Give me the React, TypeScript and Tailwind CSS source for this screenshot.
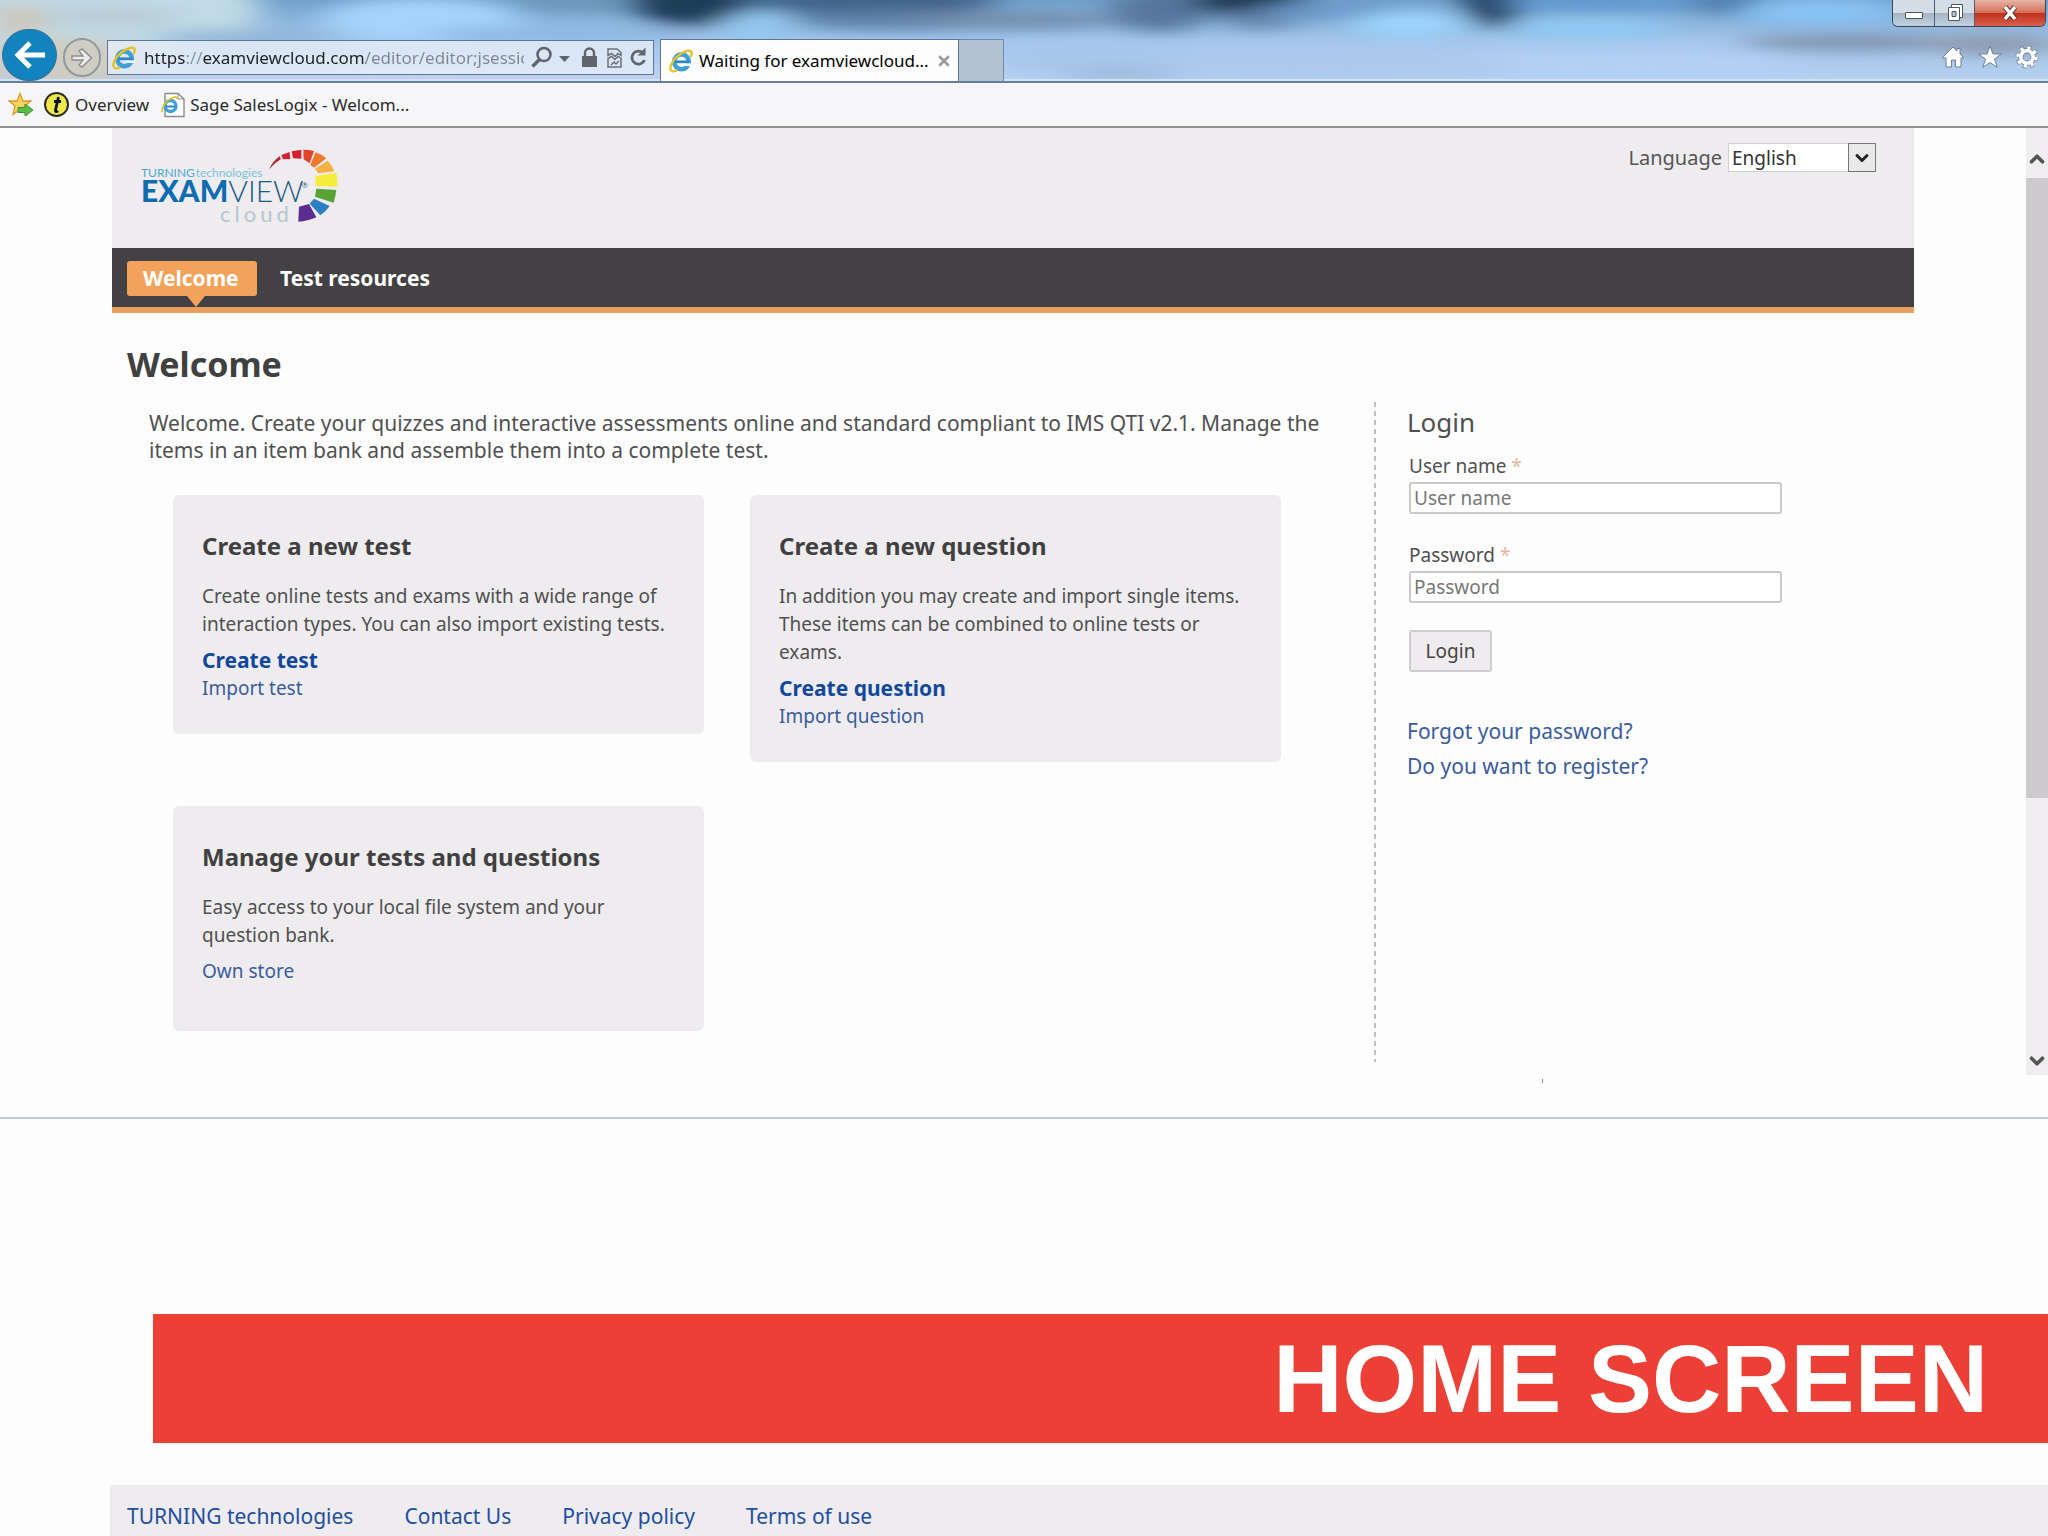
import type { ReactNode } from "react";
import { ChevronDown, ChevronUp, X } from "lucide-react";

type CardLink = { label: string; strong?: boolean };
type Card = { title: string; text: string; links: CardLink[] };

const cards: Card[] = [
  {
    title: "Create a new test",
    text: "Create online tests and exams with a wide range of interaction types. You can also import existing tests.",
    links: [{ label: "Create test", strong: true }, { label: "Import test" }],
  },
  {
    title: "Create a new question",
    text: "In addition you may create and import single items. These items can be combined to online tests or exams.",
    links: [
      { label: "Create question", strong: true },
      { label: "Import question" },
    ],
  },
  {
    title: "Manage your tests and questions",
    text: "Easy access to your local file system and your question bank.",
    links: [{ label: "Own store" }],
  },
];

const footerLinks = [
  "TURNING technologies",
  "Contact Us",
  "Privacy policy",
  "Terms of use",
];

// x, y, rx, ry, colour
const glassBlobs: [number, number, number, number, string][] = [
  [60, 10, 200, 60, "#c0dae6"],
  [20, 20, 20, 18, "#cfc3ae"],
  [110, 16, 70, 10, "#b9ccd6"],
  [60, 62, 80, 26, "#cfcdc3"],
  [420, 20, 100, 22, "#a4d3fb"],
  [250, 38, 100, 8, "#8fb4d6"],
  [560, 34, 130, 8, "#8db8e2"],
  [440, 76, 300, 8, "#c3d0f0"],
  [580, 0, 70, 10, "#6d94b8"],
  [690, 2, 60, 24, "#1f3d5a"],
  [755, 28, 36, 16, "#94c8f0"],
  [870, 0, 130, 14, "#3f6289"],
  [900, 20, 110, 10, "#5f83aa"],
  [1010, 20, 110, 8, "#6f8aa8"],
  [1160, 10, 50, 22, "#56779c"],
  [1250, 0, 60, 15, "#1f3752"],
  [1260, 20, 36, 9, "#6383aa"],
  [1330, 10, 70, 8, "#6a98c8"],
  [1410, 24, 60, 12, "#9ed6ff"],
  [1492, 2, 28, 26, "#1c3a58"],
  [1590, 28, 80, 10, "#8fcbf6"],
  [1600, 2, 100, 8, "#5e9ad2"],
  [1730, 2, 40, 12, "#4f7dac"],
  [1820, 12, 80, 14, "#88c2f4"],
  [1850, 42, 110, 9, "#8095b0"],
  [1990, 44, 70, 11, "#8d9bb0"],
  [1600, 64, 200, 14, "#b3d0f5"],
  [1320, 66, 200, 14, "#adc9ec"],
  [1090, 60, 90, 12, "#a6c6ea"],
  [1120, 76, 60, 6, "#9fb8d8"],
];

const IeIcon = () => (
  <svg viewBox="0 0 24 24" className="h-6 w-6 shrink-0" aria-hidden="true">
    <circle cx="12.5" cy="12.8" r="7.400" fill="none" stroke="#3f9fd8" strokeWidth="4.6" />
    <path d="M6 12.800h14" stroke="#2f86c4" strokeWidth="2.8" />
    <path d="M15 14.400h8.500v2.600h-8.500z" fill="#f6f9fc" />
    <path
      d="M2.500 22C-.5 19 3 11 10 6 15.500 1.800 21.500.6 22.600 3c.7 1.600-.3 3.500-1.300 5"
      fill="none"
      stroke="#e6c229"
      strokeWidth="2.4"
    />
    <path d="M2.500 22c1.500 1 4 .2 6-1" fill="none" stroke="#e6c229" strokeWidth="2.2" />
  </svg>
);

const Glass = () => (
  <svg
    viewBox="0 0 2048 81"
    preserveAspectRatio="none"
    className="absolute inset-0 h-full w-full"
    aria-hidden="true"
  >
    <defs>
      <filter id="haze" x="-5%" y="-60%" width="110%" height="220%">
        <feGaussianBlur stdDeviation="18 7" />
      </filter>
      <linearGradient id="sky" x1="0" y1="0" x2="0" y2="1">
        <stop offset="0" stopColor="#6f9fcb" />
        <stop offset="0.5" stopColor="#a3c6eb" />
        <stop offset="1" stopColor="#b6d0f0" />
      </linearGradient>
    </defs>
    <rect width="2048" height="81" fill="url(#sky)" />
    <g filter="url(#haze)">
      {glassBlobs.map(([x, y, rx, ry, fill], i) => (
        <ellipse key={i} cx={x} cy={y} rx={rx} ry={ry} fill={fill} />
      ))}
    </g>
    <rect y="79" width="2048" height="2" fill="#d3e2f4" />
  </svg>
);

const AddressBar = () => (
  <div className="flex h-[35px] w-[547px] items-center border border-[#5d7796] bg-[#e6eef7]/80 pl-1">
    <IeIcon />
    <input
      aria-label="Address"
      readOnly
      value="https://examviewcloud.com/editor/editor;jsessionid"
      className="ml-2 w-[380px] bg-[linear-gradient(to_right,#1d1f22_41px,#8b9198_41px,#8b9198_59px,#1d1f22_59px,#1d1f22_221px,#7f868e_221px)] bg-clip-text text-[17px] text-transparent outline-none"
    />
    <svg viewBox="0 0 118 28" className="ml-1.5 h-7 w-[118px] shrink-0" aria-hidden="true">
      <g fill="none" stroke="#5f656c" strokeWidth="2.6">
        <circle cx="14" cy="10.500" r="6.500" />
        <path d="M9.500 15.500 2.500 22.500" strokeWidth="3.400" />
      </g>
      <path d="M29 12h11l-5.500 6z" fill="#5f656c" />
      <path d="M52 12h15v11H52z" fill="#5f656c" />
      <path d="M55 12V9a4.500 4.500 0 0 1 9 0v3" fill="none" stroke="#5f656c" strokeWidth="2.400" />
      <g fill="none" stroke="#6b7178" strokeWidth="1.500">
        <path d="M78 11.500V5h9l4 3.500v3l-3-2-3 3-3.500-3z" />
        <path d="M78 14.500V23h13v-8.500l-3-2-3 3-3.500-3z" />
        <path d="M81 21l3-3 2 2 3-3" />
      </g>
      <path d="M113 9a6.500 6.500 0 1 0 1.500 7" fill="none" stroke="#5f656c" strokeWidth="2.800" />
      <path d="M107.500 11.500h8V3.500z" fill="#5f656c" />
    </svg>
  </div>
);

const WindowButtons = () => (
  <div className="flex h-[27px] overflow-hidden rounded-b-md border border-t-0 border-[#35485f]">
    <button
      type="button"
      aria-label="Minimize"
      className="flex w-[42px] items-end justify-center border-r border-[#4b5f78] bg-[linear-gradient(#d4dde6_50%,#a6b3c4_50%,#c3d0de)] pb-[7px]"
    >
      <span className="h-[7px] w-[18px] rounded-[1px] border border-[#4a5564] bg-white" />
    </button>
    <button
      type="button"
      aria-label="Restore"
      className="flex w-10 items-center justify-center border-r border-[#4b5f78] bg-[linear-gradient(#d4dde6_50%,#a6b3c4_50%,#c3d0de)]"
    >
      <svg viewBox="0 0 20 18" className="h-[18px] w-5" fill="#fff" stroke="#4a5564">
        <path d="M6.500.5h11v13h-11z" />
        <path d="M3.500 3.500h11v13h-11z" />
        <path d="M7 7.500h4v5H7z" fill="#b8c4d2" />
      </svg>
    </button>
    <button
      type="button"
      aria-label="Close window"
      className="flex w-[70px] items-center justify-center bg-[linear-gradient(#e8b4a6,#d6705a_48%,#bf2f1a_50%,#d9604a)]"
    >
      <svg viewBox="0 0 18 16" className="h-4 w-[18px]">
        <path d="M4 2l10 12M14 2L4 14" stroke="#5a3a3a" strokeWidth="5.500" />
        <path d="M4 2l10 12M14 2L4 14" stroke="#fff" strokeWidth="3.500" />
      </svg>
    </button>
  </div>
);

const ToolIcons = () => (
  <div className="flex gap-[11px] pr-1.5">
    <button type="button" aria-label="Home">
      <svg viewBox="0 0 26 24" className="h-6 w-[26px]">
        <path
          d="M13 2l4 4V3.500h3V9l4 4h-3v9h-5.500v-7h-4v7H6v-9H2z"
          fill="#fff"
          stroke="#6c7f98"
        />
      </svg>
    </button>
    <button type="button" aria-label="Favorites">
      <svg viewBox="0 0 26 24" className="h-6 w-[26px]">
        <path
          d="M13 1l3 8h8.500l-7 5 2.800 8.500L13 17.500l-7.300 5L8.500 14l-7-5H10z"
          fill="#fff"
          stroke="#6c7f98"
        />
      </svg>
    </button>
    <button type="button" aria-label="Tools">
      <svg viewBox="0 0 26 24" className="h-6 w-[26px]">
        <circle cx="13" cy="12" r="9" fill="none" stroke="#6c7f98" strokeWidth="5" strokeDasharray="3.900 3.168" />
        <circle cx="13" cy="12" r="6.200" fill="none" stroke="#6c7f98" strokeWidth="5.200" />
        <circle cx="13" cy="12" r="9" fill="none" stroke="#fff" strokeWidth="3.600" strokeDasharray="3.200 3.868" />
        <circle cx="13" cy="12" r="6.200" fill="none" stroke="#fff" strokeWidth="3.600" />
      </svg>
    </button>
  </div>
);

const BrowserBar = () => (
  <header className="relative flex h-[83px] justify-between border-b-2 border-[#667f9d] text-black">
    <Glass />
    <div className="relative flex items-end">
      <button
        type="button"
        aria-label="Back"
        className="ml-0.5 flex h-[52px] w-[55px] items-center justify-center rounded-full border border-[#3a6d92] bg-[#1383c0]"
      >
        <svg viewBox="0 0 32 28" className="h-7 w-8" fill="none" stroke="#fff" strokeWidth="5">
          <path d="M31 14H4M16 2L4 14l12 12" />
        </svg>
      </button>
      <button
        type="button"
        aria-label="Forward"
        className="mb-1 ml-1.5 flex h-[39px] w-[38px] items-center justify-center rounded-full border-2 border-[#8f9a9c] bg-[#cfcdc0]/60"
      >
        <svg viewBox="0 0 24 20" className="h-5 w-6">
          <path
            d="M2 8h11L9 3l3-2 9.500 9L12 19l-3-2 4-5H2z"
            fill="#ececec"
            stroke="#8a8f8f"
            strokeWidth="1.400"
          />
        </svg>
      </button>
      <div className="mb-1.5 ml-1.5">
        <AddressBar />
      </div>
      <div className="ml-1.5 flex h-[42px] w-[299px] items-center border border-b-0 border-[#5d7796] bg-[#fdfdfd] pl-2">
        <IeIcon />
        <span className="ml-1.5 text-[17px] whitespace-nowrap">Waiting for examviewcloud...</span>
        <button type="button" aria-label="Close tab" className="ml-auto pr-1.5">
          <X className="h-4 w-4 text-[#9b9b9b]" strokeWidth={4} />
        </button>
      </div>
      <button
        type="button"
        aria-label="New tab"
        className="h-[42px] w-[45px] border border-b-0 border-l-0 border-[#6b8bb2] bg-[#b3c2d3]"
      />
    </div>
    <div className="relative flex flex-col items-end justify-between pr-0.5 pb-3">
      <WindowButtons />
      <ToolIcons />
    </div>
  </header>
);

const FavoritesBar = () => (
  <nav className="flex h-[45px] items-center border-b-2 border-[#8f8f8f] bg-[#f6f6f8] pl-2 text-[17px] text-[#2a2a2a]">
    <svg viewBox="0 0 26 26" className="h-[26px] w-[26px]" aria-hidden="true">
      <path
        d="M12 1.500l3 7.500h8l-6 5 2 8.500-7-5-7 5 2-8.500-6-5h8z"
        fill="#fbd25c"
        stroke="#d79a2b"
        strokeWidth="1.300"
      />
      <path d="M10 15.500h7V12l8 6-8 6v-3.500h-7z" fill="#5dbb4a" stroke="#3b8f35" />
    </svg>
    <a href="#overview" className="ml-2.5 flex items-center">
      <span className="flex h-[25px] w-[25px] items-center justify-center rounded-full border-2 border-[#2a2a1e] bg-[#ece84e]">
        <svg viewBox="0 0 12 18" className="h-[18px] w-3" aria-hidden="true">
          <path d="M7.500 1L4.500 14c-.3 1.800 1 2 2.500.8M3 5.500h7" fill="none" stroke="#111" strokeWidth="2.800" />
        </svg>
      </span>
      <span className="ml-1.5">Overview</span>
    </a>
    <a href="#saleslogix" className="ml-[11px] flex items-center">
      <svg viewBox="0 0 26 26" className="h-[26px] w-[26px]" aria-hidden="true">
        <path d="M5 1.500h13l6 5.500v17.500H5z" fill="#fff" stroke="#8a8a8a" strokeWidth="1.400" />
        <path d="M18 1.500V7h6" fill="none" stroke="#8a8a8a" />
        <circle cx="10.500" cy="14" r="5.500" fill="none" stroke="#3f9fd8" strokeWidth="3.400" />
        <path d="M6 14.500h9" stroke="#2f86c4" strokeWidth="2" />
        <path d="M2.500 20c-2-4 4-12 10.500-14.500 2.500-1 4-.5 4 1.500" fill="none" stroke="#dcc52c" strokeWidth="1.800" />
      </svg>
      <span className="ml-1">Sage SalesLogix - Welcom...</span>
    </a>
  </nav>
);

const Logo = () => (
  <a href="#home" aria-label="ExamView cloud" className="block">
    <svg viewBox="0 0 200 90" className="h-[90px] w-[200px]">
      <g fontFamily="Lato, sans-serif">
        <text x="0" y="30" fontSize="12" fill="#49a9cf">
          TURNING
          <tspan fill="#7cc3dc" dx="1">
            technologies
          </tspan>
        </text>
        <text x="0" y="55" fontSize="30" fill="#0f6cb0" fontWeight="900">
          EXAM
          <tspan fontWeight="300" fill="#1b5b87">
            VIEW
          </tspan>
        </text>
        <text x="161" y="41" fontSize="7" fill="#1b5b87">
          ®
        </text>
        <text x="79" y="75" fontSize="22" fill="#b3c6d3" className="tracking-[4px]">
          cloud
        </text>
      </g>
      <g transform="translate(-42 -27) scale(0.3333)">
        <path d="M510 148Q522 122 543 108l2 10Q528 128 510 148z" fill="#b3273a" />
        <path d="M547 105l25-9 2 21-22 1z" fill="#cf2233" />
        <path d="M578 94l29-5v27l-25-1z" fill="#d3202f" />
        <path d="M613 89q18 0 32 4l-13 37-18-12z" fill="#e2452a" />
        <path d="M650 97q18 6 32 18l-37 28-11-9z" fill="#ee7a2b" />
        <path d="M686 122q14 14 20 32l-48 6-10-14z" fill="#f6b043" />
        <path d="M650 168l62-10q5 20 3 42l-65-2z" fill="#f7ec3c" />
        <path d="M652 206l60 4q-2 20-8 38l-56-18z" fill="#58a333" />
        <path d="M645 236l47 22q-12 18-28 28l-32-35z" fill="#2b7fc3" />
        <path d="M600 260l30-8 22 40q-26 12-54 13z" fill="#5b2d90" />
      </g>
    </svg>
  </a>
);

const SiteHeader = () => (
  <div className="flex h-[120px] items-start justify-between bg-[#eeecef] pt-[15px] pr-[38px] pl-[29px]">
    <div className="pt-1">
      <Logo />
    </div>
    <div className="flex items-center text-xl leading-[29px] text-[#555]">
      <label htmlFor="language">Language</label>
      <div className="relative ml-1.5">
        <select
          id="language"
          className="block h-[29px] w-[148px] appearance-none border border-[#cfcfcf] bg-white pl-[3px] text-[19px] leading-6 text-[#333]"
        >
          <option>English</option>
        </select>
        <span className="pointer-events-none absolute top-0 right-0 flex h-[29px] w-7 items-center justify-center border border-[#777] bg-[#e9e9e9] text-[#222]">
          <ChevronDown className="h-5 w-5" strokeWidth={3.5} />
        </span>
      </div>
    </div>
  </div>
);

const MainNav = () => (
  <nav className="flex h-[65px] items-start gap-[23px] border-b-[6px] border-[#e9a05c] bg-[#434143] pt-[13px] pl-[15px] text-[21px] leading-[34px] font-bold text-white">
    <a href="#welcome" className="relative h-[35px] w-[130px] rounded-[3px] bg-[#f3a25c] pl-4">
      Welcome
      <svg viewBox="0 0 18 11" className="absolute top-full left-[60px] h-[11px] w-[18px]">
        <path d="M0 0h18L9 11z" fill="#f3a25c" />
      </svg>
    </a>
    <a href="#resources">Test resources</a>
  </nav>
);

const CardBox = ({ card }: { card: Card }) => (
  <section className="min-h-[225px] rounded-md bg-[#eeecef] pt-[35px] pr-7 pb-8 pl-[29px] leading-7">
    <h2 className="text-[24px] leading-8 font-bold text-[#404040]">{card.title}</h2>
    <p className="mt-5 text-[19px] leading-7">{card.text}</p>
    <ul className="mt-2">
      {card.links.map((link) => (
        <li key={link.label} className="flex">
          <a
            href="#card"
            className={
              link.strong
                ? "text-[21px] leading-7 font-bold text-[#12489b]"
                : "text-[19px] leading-7 text-[#3a5c9c]"
            }
          >
            {link.label}
          </a>
        </li>
      ))}
    </ul>
  </section>
);

const Field = ({ id, type, children }: { id: string; type: string; children: string }) => (
  <div className="mb-[27px] flex flex-col gap-0.5">
    <label htmlFor={id} className="text-[19px] leading-7">
      {children} <span className="text-[#e3b79d]">*</span>
    </label>
    <input
      id={id}
      type={type}
      placeholder={children}
      className="h-8 w-[373px] rounded-[3px] border-2 border-[#cbc7ca] bg-white px-[3px] text-[19px] placeholder:text-[#777]"
    />
  </div>
);

const LoginPanel = () => (
  <aside className="w-[538px] shrink-0 pl-[31px]">
    <h2 className="pt-0.5 text-[26px] leading-9">Login</h2>
    <form className="mt-3 pl-0.5">
      <Field id="user" type="text">
        User name
      </Field>
      <Field id="password" type="password">
        Password
      </Field>
      <button
        type="button"
        className="h-[42px] w-[83px] rounded-[3px] border-2 border-[#cfcccf] bg-[#eeecee] text-[19px] text-[#444]"
      >
        Login
      </button>
    </form>
    <div className="mt-[42px] flex flex-col items-start text-[21px] leading-[35px] text-[#3a5c9c]">
      <a href="#forgot">Forgot your password?</a>
      <a href="#register">Do you want to register?</a>
    </div>
  </aside>
);

const ScrollBar = () => (
  <div className="flex w-[22px] shrink-0 flex-col bg-[#f0eef0] text-[#555]">
    <div className="flex h-[50px] items-center justify-center pt-3">
      <ChevronUp className="h-6 w-6" strokeWidth={4} />
    </div>
    <div className="h-[620px] bg-[#cdcacd]" />
    <div className="mt-auto flex h-[26px] items-start justify-center">
      <ChevronDown className="h-6 w-6" strokeWidth={4} />
    </div>
  </div>
);

const Viewport = ({ children }: { children: ReactNode }) => (
  <div className="flex min-h-[947px]">
    <div className="flex-1 px-28">{children}</div>
    <ScrollBar />
  </div>
);

const App = () => {
  return (
    <div className="flex min-h-screen flex-col bg-[#fdfdfd] font-['Noto_Sans','Open_Sans',sans-serif] text-[#505050]">
      <BrowserBar />
      <FavoritesBar />
      <Viewport>
        <SiteHeader />
        <MainNav />
        <h1 className="mt-[31px] pl-[15px] text-[34px] leading-10 font-bold text-[#404040]">
          Welcome
        </h1>
        <div className="mt-[18px] flex">
          <div className="flex-1 pb-[31px]">
            <p className="pt-2 pr-12 pl-[37px] text-[21px] leading-[27px]">
              Welcome. Create your quizzes and interactive assessments online
              and standard compliant to IMS QTI v2.1. Manage the items in an
              item bank and assemble them into a complete test.
            </p>
            <div className="mt-[31px] grid grid-cols-2 items-start gap-x-[46px] gap-y-11 pr-[93px] pl-[61px]">
              {cards.map((card) => (
                <CardBox key={card.title} card={card} />
              ))}
            </div>
          </div>
          <div className="w-0.5 bg-[repeating-linear-gradient(#c2bec2_0_5px,transparent_5px_9px)]" />
          <LoginPanel />
        </div>
      </Viewport>
      <div className="flex h-[44px] justify-end border-b-2 border-[#b9cbe0] pt-1 pr-[505px]">
        <span className="h-1 w-px bg-[#8a8a8a]" />
      </div>
      <div className="mt-[195px] ml-[153px] bg-[#ec4037] pr-[60px] text-right font-['Liberation_Sans',Arial,sans-serif] text-8xl leading-[129px] font-bold text-white">
        HOME SCREEN
      </div>
      <footer className="mt-[42px] ml-[110px] flex h-[51px] items-start gap-[51px] bg-[#eeecef] pt-[15px] pl-[17px] text-[21px] leading-8 text-[#1f4f9f]">
        {footerLinks.map((label) => (
          <a key={label} href="#footer">
            {label}
          </a>
        ))}
      </footer>
    </div>
  );
};

export default App;
